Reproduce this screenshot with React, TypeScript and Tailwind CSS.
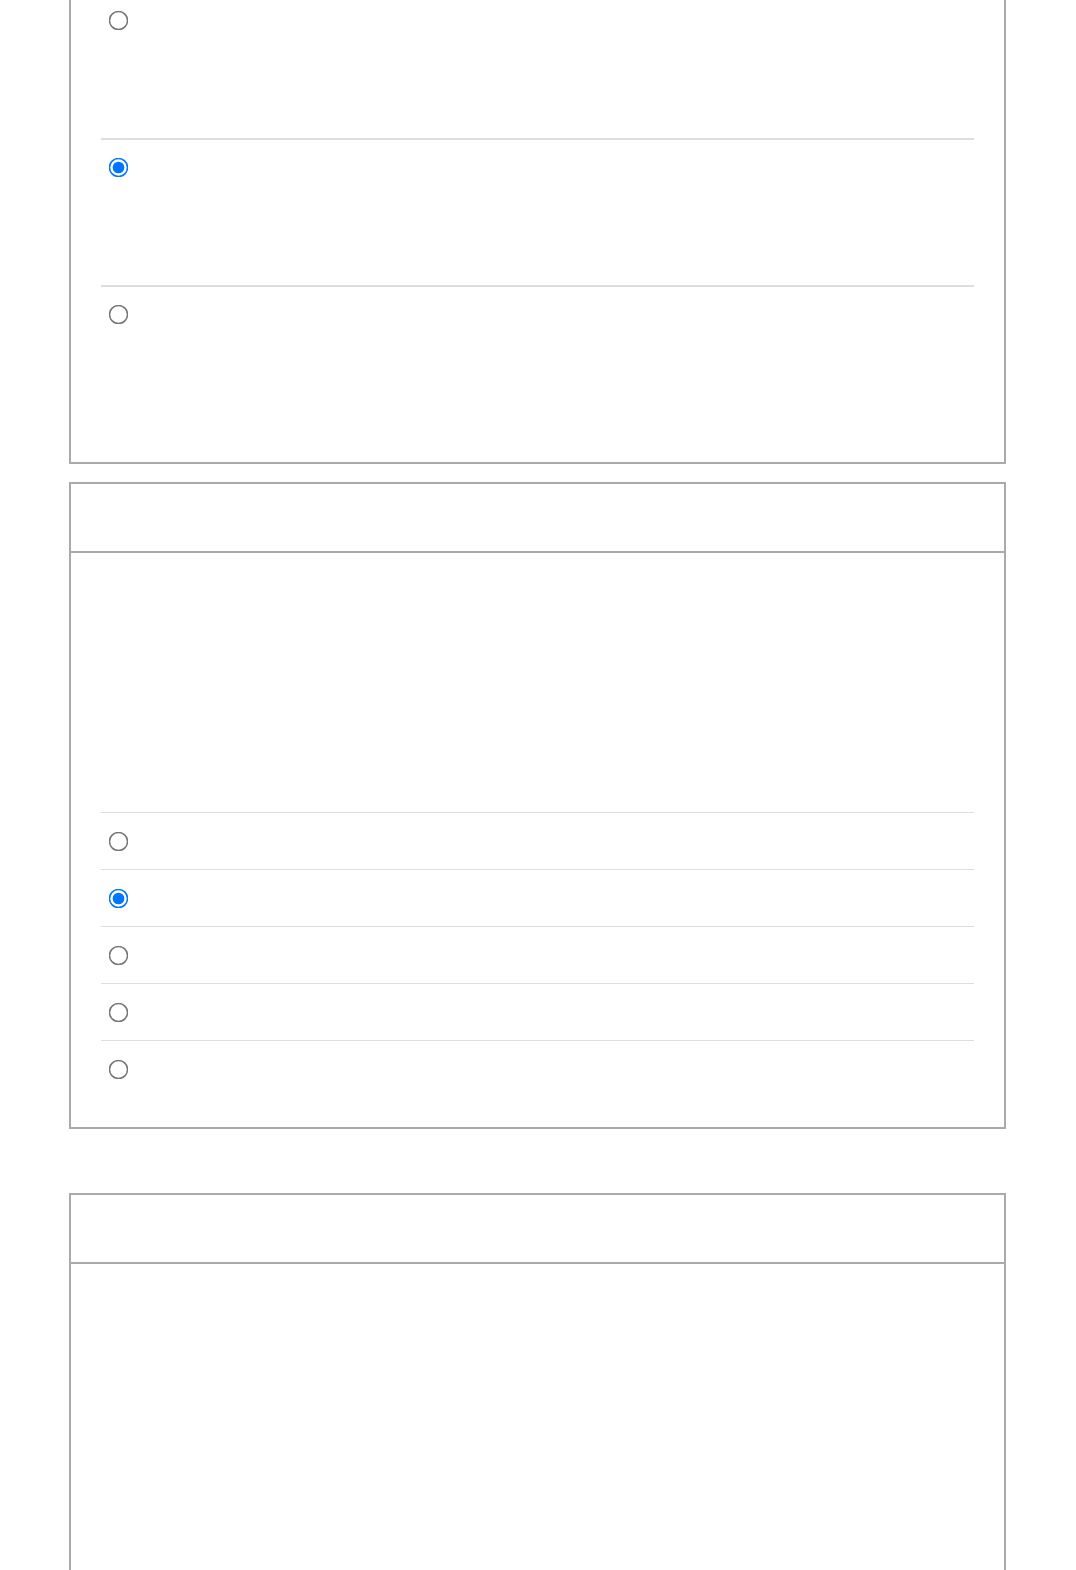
import React, { useState } from 'react';

// Native radio, drawn at 13px and scaled up so the ring keeps its weight
const Radio = ({ name, checked, onChange }: { name: string; checked: boolean; onChange: () => void }) => (
  <span className="ml-[7px] w-[20px] h-[20px] shrink-0 flex items-center justify-center">
    <input
      type="radio"
      name={name}
      checked={checked}
      onChange={onChange}
      className="m-0 w-[13px] h-[13px] scale-150"
    />
  </span>
);

const Card = ({ children, className = '' }: { children: React.ReactNode; className?: string }) => (
  <section className={`w-[937px] ml-[69px] border-2 border-[#aaaaaa] bg-white ${className}`}>
    {children}
  </section>
);

const App: React.FC = () => {
  const [plan, setPlan] = useState(1);
  const [size, setSize] = useState(1);

  const plans = [0, 1, 2];
  const sizes = [0, 1, 2, 3, 4];

  return (
    <div className="min-h-[1570px] bg-white font-['Liberation_Sans',sans-serif] overflow-hidden">
      {/* Card 1 - scrolled partly off the top */}
      <Card className="-mt-[39px] px-[30px] pt-[30px] pb-[30px]">
        {plans.map((p, i) => (
          <div
            key={p}
            className={i > 0 ? 'h-[147px] pt-[17px] border-t-2 border-[#dddddd]' : 'h-[145px] pt-[17px]'}
          >
            <Radio name="plan" checked={plan === p} onChange={() => setPlan(p)} />
          </div>
        ))}
      </Card>

      {/* Card 2 */}
      <Card className="mt-[18px]">
        <div className="h-[69px] border-b-2 border-[#aaaaaa]" />
        <div className="px-[30px] pt-[30px] pb-[30px]">
          <div className="h-[229px]" />
          {sizes.map((s) => (
            <div key={s} className="h-[57px] border-t border-[#dedede] flex items-center">
              <Radio name="size" checked={size === s} onChange={() => setSize(s)} />
            </div>
          ))}
        </div>
      </Card>

      {/* Card 3 */}
      <Card className="mt-[64px]">
        <div className="h-[69px] border-b-2 border-[#aaaaaa]" />
        <div className="h-[400px]" />
      </Card>
    </div>
  );
};

export default App;
